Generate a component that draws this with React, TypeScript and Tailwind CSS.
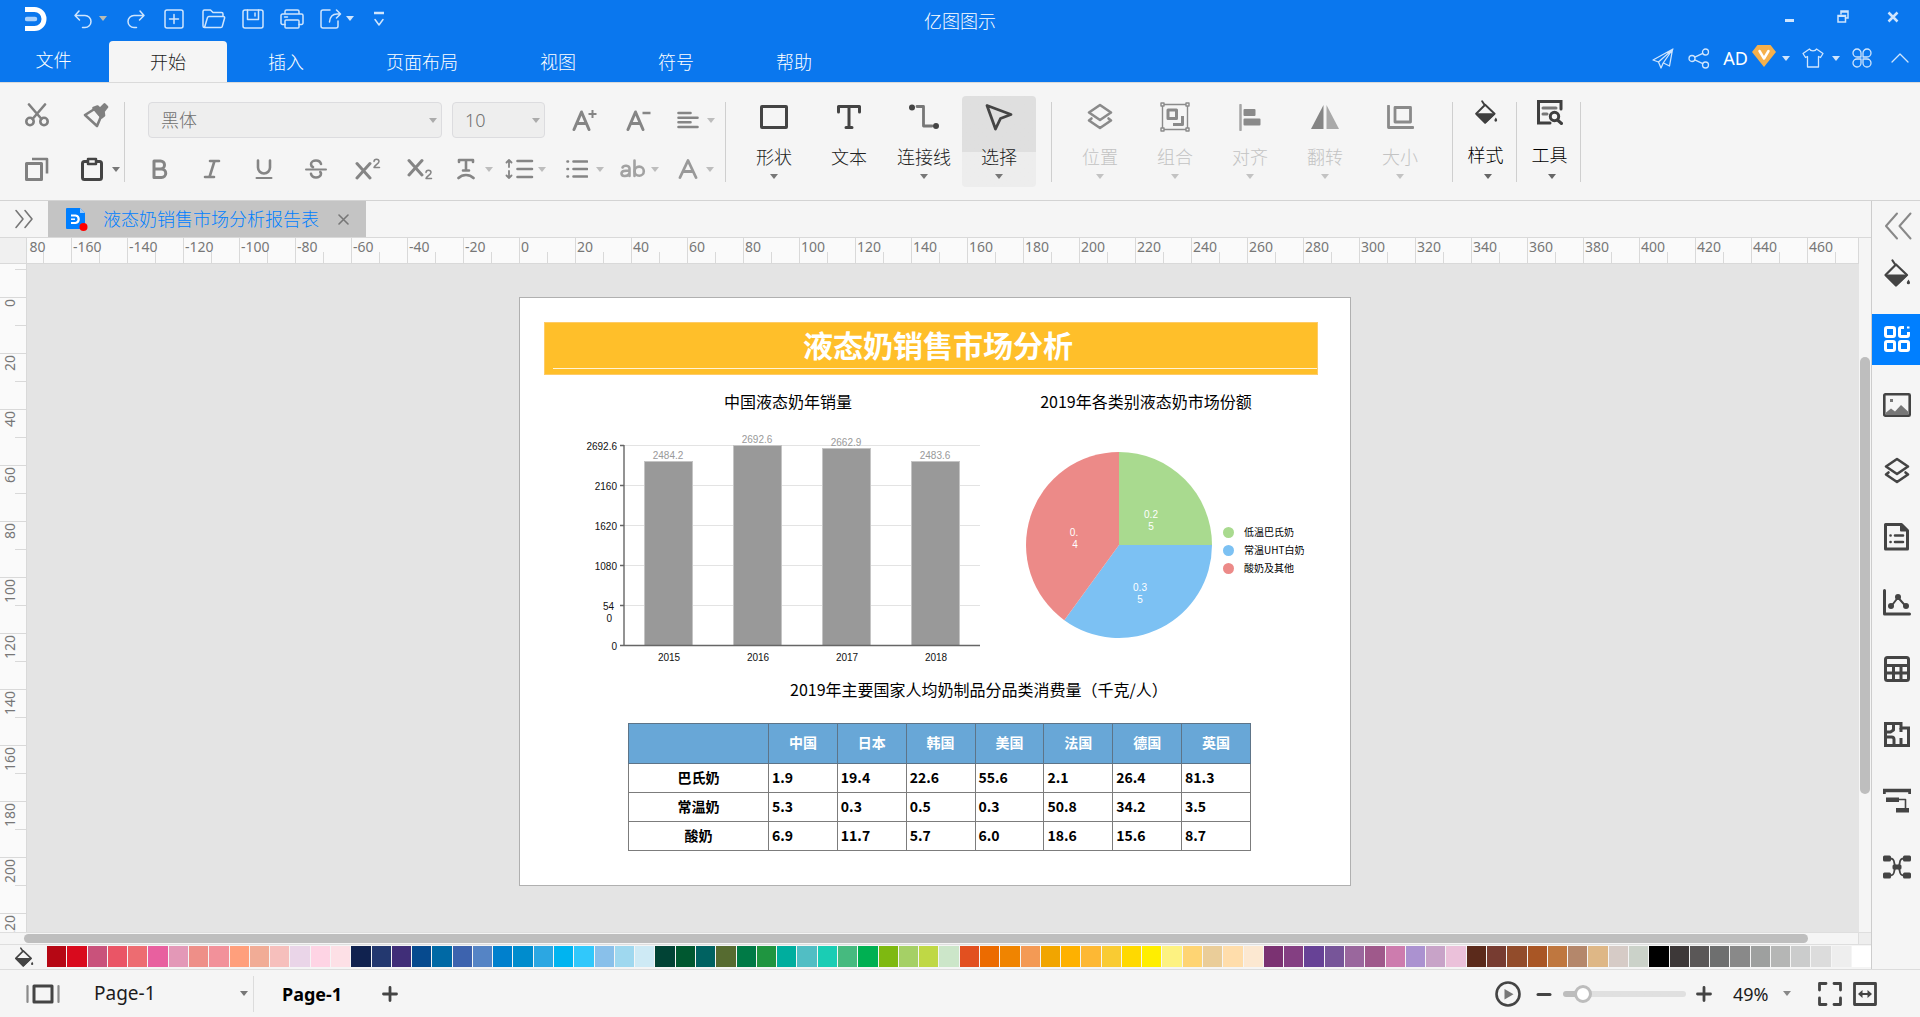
import { useState } from 'react';
import type { ReactNode } from 'react';

type IconProps = { w: number; h: number; children: ReactNode; sw?: number; className?: string };

function Icon({ w, h, children, sw = 2, className = '' }: IconProps) {
  return (
    <svg
      width={w}
      height={h}
      viewBox={`0 0 ${w} ${h}`}
      fill="none"
      stroke="currentColor"
      strokeWidth={sw}
      strokeLinecap="round"
      strokeLinejoin="round"
      aria-hidden="true"
      className={`shrink-0 ${className}`}
    >
      {children}
    </svg>
  );
}

function Caret({ className = '' }: { className?: string }) {
  return (
    <svg width="8" height="5" viewBox="0 0 8 5" fill="currentColor" aria-hidden="true" className={`shrink-0 ${className}`}>
      <path d="M0 0h8L4 5z" />
    </svg>
  );
}

/* ---------- title bar ---------- */

const MENU = ['插入', '页面布局', '视图', '符号', '帮助'];

function BarButton({ label, width, children }: { label: string; width: string; children: ReactNode }) {
  return (
    <button type="button" aria-label={label} className={`flex h-8 items-center justify-center ${width}`}>
      {children}
    </button>
  );
}

function TitleBar() {
  return (
    <div className="grid h-[41px] grid-cols-[1fr_auto_1fr] text-[#cfe5fd]">
      <div className="flex h-[37px] items-center pl-[25px]">
        <svg width="22" height="24" viewBox="0 0 22 24" fill="none" aria-hidden="true">
          <path d="M0 2.500h9.500a9.500 9.500 0 0 1 0 19H0" stroke="#fff" strokeWidth="5" />
          <path d="M2 12h8" stroke="#a9d0fb" strokeWidth="4.500" strokeLinecap="round" />
        </svg>
        <div className="flex items-center pl-[24px]">
          <BarButton label="撤销" width="w-[24px]">
            <Icon w={20} h={20} sw={1.5}>
              <path d="M6 2 2 6.500 6.500 11M2.500 6.500H12a6 6 0 0 1 0 12H9.500" />
            </Icon>
          </BarButton>
          <BarButton label="撤销列表" width="w-[16px]">
            <Caret className="text-[#b9bcb4]" />
          </BarButton>
        </div>
        <div className="flex items-center pl-[14px]">
          <BarButton label="重做" width="w-[22px]">
            <Icon w={20} h={20} sw={1.5}>
              <path d="M14 2l4 4.500L13.500 11M17.500 6.500H8a6 6 0 0 0 0 12h2.500" />
            </Icon>
          </BarButton>
        </div>
        <div className="flex items-center pl-[7px]">
          <BarButton label="新建" width="w-[40px]">
            <Icon w={20} h={20} sw={1.5}>
              <rect x="1" y="1" width="18" height="18" rx="2" />
              <path d="M10 5.500v9M5.500 10h9" />
            </Icon>
          </BarButton>
          <BarButton label="打开" width="w-[40px]">
            <Icon w={24} h={20} sw={1.5}>
              <path d="M2.500 18.500a1.500 1.500 0 0 1-1.500-1.500V2.500A1.500 1.500 0 0 1 2.500 1h6l2.500 2.500h8.500A1.500 1.500 0 0 1 21 5v2.500M2.500 18.500 5.500 8.500a1.500 1.500 0 0 1 1.500-1h14.500a1.200 1.200 0 0 1 1.100 1.500l-2.300 8.300a1.500 1.500 0 0 1-1.500 1.200z" />
            </Icon>
          </BarButton>
          <BarButton label="保存" width="w-[38px]">
            <Icon w={22} h={20} sw={1.5}>
              <rect x="1" y="1" width="20" height="18" rx="2" />
              <path d="M5.500 1v9.500h11V1M13 4v3" />
            </Icon>
          </BarButton>
          <BarButton label="打印" width="w-[40px]">
            <Icon w={24} h={20} sw={1.5}>
              <path d="M5 5V2.500A1.500 1.500 0 0 1 6.500 1h11A1.500 1.500 0 0 1 19 2.500V5M5 15.500H2.500A1.500 1.500 0 0 1 1 14V6.500A1.500 1.500 0 0 1 2.500 5h19A1.500 1.500 0 0 1 23 6.500V14a1.500 1.500 0 0 1-1.500 1.500H19" />
              <rect x="5" y="11" width="14" height="8" rx="1" />
              <path d="M4.500 8h3" />
            </Icon>
          </BarButton>
        </div>
        <div className="flex items-center pl-[8px]">
          <BarButton label="导出" width="w-[22px]">
            <Icon w={22} h={20} sw={1.5}>
              <path d="M10 1H3a2 2 0 0 0-2 2v14a2 2 0 0 0 2 2h13a2 2 0 0 0 2-2v-5M16.500 1l4 4-4 4M20 5h-3c-4 0-7 2.500-7.500 8" />
            </Icon>
          </BarButton>
          <BarButton label="导出列表" width="w-[16px]">
            <Caret />
          </BarButton>
          <div className="pl-[14px]">
            <BarButton label="自定义工具栏" width="w-[14px]">
              <Icon w={12} h={16} sw={1.5}>
                <path d="M1 2h10" strokeWidth="2.500" strokeLinecap="butt" />
                <path d="M2 8.500l4 5.500 4-5.500" />
              </Icon>
            </BarButton>
          </div>
        </div>
      </div>
      <h1 className="self-center text-[18px] leading-6 font-light text-white">亿图图示</h1>
      <div className="flex h-[33px] items-center justify-end pr-[13px]">
        <BarButton label="最小化" width="w-[52px]">
          <span className="mt-[7px] h-[3px] w-[9px] bg-current" />
        </BarButton>
        <BarButton label="还原" width="w-[56px]">
          <Icon w={12} h={13} sw={1.5}>
            <path d="M4 4V1h7v7H8.500M4 2h7" strokeLinejoin="miter" />
            <path d="M1 5.500h7.500V12H1zM1 6.200h7.500" strokeLinejoin="miter" />
          </Icon>
        </BarButton>
        <BarButton label="关闭" width="w-[36px]">
          <Icon w={12} h={12} sw={2.5} className="ml-2">
            <path d="M1.500 1.500l9 9M10.500 1.500l-9 9" strokeLinecap="butt" />
          </Icon>
        </BarButton>
      </div>
    </div>
  );
}

function MenuBar() {
  return (
    <div className="flex h-[41px] justify-between">
      <nav className="flex text-[18px] leading-6 font-light text-white">
        <button type="button" className="w-[107px] pb-1 text-center">
          文件
        </button>
        <button type="button" className="ml-0.5 rounded-t-sm bg-[#f5f5f5] px-[41px] text-[#222]">
          开始
        </button>
        {MENU.map((m) => (
          <button type="button" key={m} className="px-[41px]">
            {m}
          </button>
        ))}
      </nav>
      <div className="flex h-[34px] items-center pr-1 text-[#cfe5fd]">
        <BarButton label="发送" width="w-[36px]">
          <Icon w={22} h={21} sw={1.3}>
            <path d="M21 1 1 12l5.500 2L20.500 1.500 17.500 18l-6-3M6.500 14l2.500 6 2.200-5L20.500 1.500" />
          </Icon>
        </BarButton>
        <BarButton label="分享" width="w-[36px]">
          <Icon w={22} h={21} sw={1.3}>
            <circle cx="4" cy="10.500" r="3" />
            <circle cx="17.500" cy="4" r="3" />
            <circle cx="17.500" cy="17" r="3" />
            <path d="M6.800 9.200l8-3.800M6.800 11.800l8 3.800" />
          </Icon>
        </BarButton>
        <button type="button" className="flex items-center pl-1.5 text-[18px] leading-6 text-white">
          AD
          <svg width="24" height="22" viewBox="0 0 24 22" aria-hidden="true" className="mb-1 ml-1">
            <path d="M5.500 0h13L24 7 12 22 0 7z" fill="#f5b04c" />
            <path d="M7.500 6l4.500 7.500L16.500 6" fill="none" stroke="#fff" strokeWidth="2.500" strokeLinecap="round" strokeLinejoin="round" />
          </svg>
          <Caret className="ml-1.5 text-[#cfe5fd]" />
        </button>
        <button type="button" aria-label="主题" className="flex items-center pl-3">
          <Icon w={22} h={20} sw={1.3}>
            <path d="M7.500 1 1 5.500l2.500 4L5.500 8.500V19h11V8.500l2 1 2.500-4L14.500 1c-1 2.500-6 2.500-7 0z" />
          </Icon>
          <Caret className="ml-2" />
        </button>
        <BarButton label="应用" width="w-[44px]">
          <Icon w={20} h={20} sw={1.3}>
            <path d="M9 5a4 4 0 1 0-4 4h4zM11 5a4 4 0 1 1 4 4h-4zM9 15a4 4 0 1 1-4-4h4zM11 15a4 4 0 1 0 4-4h-4z" />
          </Icon>
        </BarButton>
        <BarButton label="收起功能区" width="w-[32px]">
          <Icon w={18} h={10} sw={1.3}>
            <path d="M1 9l8-8 8 8" />
          </Icon>
        </BarButton>
      </div>
    </div>
  );
}

/* ---------- ribbon ---------- */

function Divider() {
  return <div className="mt-[19px] h-[80px] w-px bg-[#cfcfcf]" />;
}

function SelectBox({ label, value, width }: { label: string; value: string; width: string }) {
  return (
    <div className={`grid h-9 items-center ${width}`}>
      <select
        aria-label={label}
        defaultValue={value}
        className="col-start-1 row-start-1 h-9 w-full appearance-none rounded-sm border border-[#dcdcdf] bg-[#eeeeee] pl-3 text-[18px] font-light text-[#707070]"
      >
        <option>{value}</option>
      </select>
      <Caret className="pointer-events-none col-start-1 row-start-1 mr-[5px] justify-self-end text-[#ababab]" />
    </div>
  );
}

function FormatButton({ label, children }: { label: string; children: ReactNode }) {
  return (
    <button type="button" aria-label={label} className="flex h-9 w-[52px] items-center justify-center">
      {children}
    </button>
  );
}

function DropButton({ label, width, box, children }: { label: string; width: string; box: string; children: ReactNode }) {
  return (
    <button type="button" aria-label={label} className={`flex h-9 items-center ${width}`}>
      <span className={box}>{children}</span>
      <Caret className="text-[#bdbdbd]" />
    </button>
  );
}

function ToolButton({ label, icon, caret = true, state = 'normal' }: { label: string; icon: ReactNode; caret?: boolean; state?: 'normal' | 'active' | 'disabled' }) {
  const tone = state === 'disabled' ? 'text-[#c3c3c3]' : 'text-[#222]';
  const iconTone = state === 'disabled' ? 'text-[#8a8a8a]' : 'text-[#444]';
  const back = state === 'active' ? 'bg-linear-to-b from-[#dfdfdf] from-[56px] to-[#ededed] to-[56px]' : '';
  return (
    <button type="button" disabled={state === 'disabled'} className={`flex h-[91px] w-[74px] flex-col items-center rounded-sm ${tone} ${back}`}>
      <span className={`flex h-[42px] items-center ${iconTone}`}>{icon}</span>
      <span className="mt-[6px] text-[18px] leading-[26px] font-light">{label}</span>
      {caret && <Caret className={state === 'disabled' ? 'mt-1 text-[#c3c3c3]' : 'mt-1 text-[#777]'} />}
    </button>
  );
}

function WideButton({ label, icon }: { label: string; icon: ReactNode }) {
  return (
    <button type="button" className="mt-[13px] flex h-[91px] w-[63px] flex-col items-center pl-0.5 text-black">
      <span className="flex h-8 items-center text-[#3f3f3f]">{icon}</span>
      <span className="mt-[14px] text-[18px] leading-[26px] font-light">{label}</span>
      <Caret className="mt-[6px] ml-1 text-[#666]" />
    </button>
  );
}

function Bucket({ size }: { size: number }) {
  return (
    <svg width={size} height={size} viewBox="0 0 26 28" fill="none" stroke="currentColor" strokeWidth="2.200" strokeLinejoin="round" strokeLinecap="round" aria-hidden="true">
      <path d="M8.500 1.500l3 4.500M12 5.500 23 16 12 26.500 1.500 16z" />
      <path d="M2.500 16.500h19.500L12 26z" fill="currentColor" />
      <path d="M24.500 20.500c1.200 1.800 1.500 2.500 1.500 3.200a1.600 1.600 0 0 1-3.200 0c0-.7.500-1.400 1.700-3.200z" fill="currentColor" stroke="none" />
    </svg>
  );
}

function LayersIcon() {
  return (
    <Icon w={28} h={28} sw={2.6}>
      <path d="M14 2l11 7.500L14 17 3 9.500z" />
      <path d="M5.500 15.500 3 17.500 14 25l11-7.500-2.500-2" />
    </Icon>
  );
}

function Ribbon() {
  return (
    <div className="flex h-[119px] border-y border-t-[#dadada] border-b-[#d3d3d3] bg-[#f5f5f5]">
      <div className="flex w-[124px] flex-col gap-[18px] pt-[14px] text-[#808080]">
        <div className="flex h-9 items-center pl-[25px]">
          <button type="button" aria-label="剪切">
            <Icon w={24} h={24} sw={2.6}>
              <path d="M4 1.500 16.500 16M20 1.500 7.500 16" />
              <circle cx="5" cy="18.500" r="3.700" />
              <circle cx="19" cy="18.500" r="3.700" />
            </Icon>
          </button>
          <button type="button" aria-label="格式刷" className="ml-[34px]">
            <Icon w={26} h={25} sw={2.6}>
              <path d="M2 12 11.500 6 18 13.500 14 23z" />
              <path d="M10.500 5l4-1.500L17 6l4.500-4.500 2.500 2.500-3.500 4.500.5 4-2.500 2z" fill="currentColor" />
            </Icon>
          </button>
        </div>
        <div className="flex h-9 items-center pl-[25px]">
          <button type="button" aria-label="复制">
            <Icon w={24} h={24} sw={3}>
              <path d="M1.500 6.500h15v16h-15z" />
              <path d="M7 2h15v14.500" strokeWidth="2.600" strokeLinecap="butt" />
            </Icon>
          </button>
          <button type="button" aria-label="粘贴" className="ml-8 flex items-center gap-[9px] text-[#444]">
            <Icon w={22} h={24} sw={3}>
              <rect x="1.500" y="4.500" width="19" height="18" rx="2" />
              <path d="M7 2h8v5H7z" fill="#f5f5f5" strokeWidth="2.500" />
            </Icon>
            <Caret className="text-[#777]" />
          </button>
        </div>
      </div>
      <Divider />

      <div className="flex w-[600px] flex-col gap-[13px] pt-[19px] text-[#858585]">
        <div className="flex items-center pl-[23px]">
          <SelectBox label="字体" value="黑体" width="w-[294px]" />
          <div className="w-[10px]" />
          <SelectBox label="字号" value="10" width="w-[93px]" />
          <button type="button" aria-label="增大字号" className="ml-[27px]">
            <Icon w={26} h={22} sw={3}>
              <path d="M2 20.500 9.500 3 17 20.500M5 14.500h9" />
              <path d="M20.500 1v8M16.500 5h8" strokeWidth="2" strokeLinecap="butt" />
            </Icon>
          </button>
          <button type="button" aria-label="减小字号" className="ml-[28px]">
            <Icon w={26} h={22} sw={3}>
              <path d="M2 20.500 9.500 3 17 20.500M5 14.500h9" />
              <path d="M16.500 4h8" strokeWidth="2.500" strokeLinecap="butt" />
            </Icon>
          </button>
          <div className="ml-[25px]">
            <DropButton label="对齐方式" width="w-[40px]" box="w-[30px]">
              <Icon w={22} h={18} sw={2.6}>
                <path d="M1.500 2h12M1.500 6.700h19M1.500 11.300h12M1.500 16h19" />
              </Icon>
            </DropButton>
          </div>
        </div>
        <div className="flex items-center pl-[9px]">
          <FormatButton label="加粗">
            <Icon w={18} h={20} sw={3}>
              <path d="M3 2h6.500a4 4 0 0 1 0 8H3zM3 10h7.500a4.200 4.200 0 0 1 0 8.500H3z" />
            </Icon>
          </FormatButton>
          <FormatButton label="斜体">
            <Icon w={18} h={20} sw={2.6}>
              <path d="M7 2h9M2 18h9M11.500 2 6.500 18" />
            </Icon>
          </FormatButton>
          <FormatButton label="下划线">
            <Icon w={18} h={20} sw={2.6}>
              <path d="M3 1.500v7a6 6 0 0 0 12 0v-7" />
              <path d="M1.500 19h15" strokeWidth="2" />
            </Icon>
          </FormatButton>
          <FormatButton label="删除线">
            <Icon w={22} h={20} sw={2.6}>
              <path d="M16 5c-.5-2-2.500-3.500-5-3.500S6 3 6 5.200c0 1.500.8 2.300 2 3M6 14.800c.5 2.200 2.500 3.700 5 3.700s5-1.500 5-3.700c0-.8-.3-1.400-.7-1.800" />
              <path d="M1 10.500h20" strokeWidth="2" />
            </Icon>
          </FormatButton>
          <FormatButton label="上标">
            <Icon w={26} h={22} sw={3}>
              <path d="M2 5.500 15 20M15 5.500 2 20" />
              <path d="M19 3.500c0-3 5-3 5 0 0 2-4.500 4-5 6h5.500" strokeWidth="1.500" />
            </Icon>
          </FormatButton>
          <FormatButton label="下标">
            <Icon w={26} h={22} sw={3}>
              <path d="M2 2.500 15 17M15 2.500 2 17" />
              <path d="M19 14.500c0-3 5-3 5 0 0 2-4.500 4-5 6h5.500" strokeWidth="1.500" />
            </Icon>
          </FormatButton>
          <div className="flex pl-[11px]">
            <DropButton label="文字效果" width="w-[48px]" box="w-[28px]">
              <Icon w={18} h={22} sw={2.6}>
                <path d="M2 4V2h14v2M9 2v10M6 12.500h6" />
                <path d="M1.500 20c4-4 11-4 15 0" />
              </Icon>
            </DropButton>
            <DropButton label="行距" width="w-[61px]" box="w-[33px]">
              <Icon w={29} h={20} sw={2.6}>
                <path d="M12.500 2h14.500M12.500 10h14.500M12.500 18h14.500" />
                <path d="M4 1v7M1.500 3.500 4 1l2.500 2.500M4 12v7M1.500 16.500 4 19l2.500-2.500" strokeWidth="1.800" />
              </Icon>
            </DropButton>
            <DropButton label="项目符号" width="w-[54px]" box="w-[30px]">
              <Icon w={22} h={20} sw={2.6}>
                <path d="M7.500 2.500h13.500M7.500 10h13.500M7.500 17.500h13.500M1.500 2.500h.5M1.500 10h.5M1.500 17.500h.5" />
              </Icon>
            </DropButton>
            <DropButton label="大小写" width="w-[58px]" box="w-[31px]">
              <Icon w={26} h={20} sw={2.6} className="text-[#a2a2a2]">
                <path d="M2.500 8.500c1-2.500 7-2.500 7 1V17M9.500 11.500c-5 0-8 .3-8 3s5 4 8 0M14.500 1.500V17" />
                <circle cx="19.200" cy="12.200" r="4.600" />
              </Icon>
            </DropButton>
            <DropButton label="字体颜色" width="w-[36px]" box="w-[28px]">
              <Icon w={20} h={20} sw={2.8} className="text-[#999]">
                <path d="M2 18.500 10 1.500l8 17M5 12.500h10" />
              </Icon>
            </DropButton>
          </div>
        </div>
      </div>
      <Divider />

      <div className="flex gap-px pt-[13px] pr-[15px] pl-[11px]">
        <ToolButton
          label="形状"
          icon={
            <Icon w={28} h={24} sw={3}>
              <rect x="1.500" y="1.500" width="25" height="21" rx="0.500" />
            </Icon>
          }
        />
        <ToolButton
          label="文本"
          caret={false}
          icon={
            <Icon w={24} h={24} sw={3}>
              <path d="M1.500 7V1.500h21V7M12 2v20M9 22.500h6" />
            </Icon>
          }
        />
        <ToolButton
          label="连接线"
          icon={
            <Icon w={32} h={26} sw={2.8}>
              <path d="M9 2.500h6.500v19.500H24" className="text-[#777]" stroke="currentColor" />
              <circle cx="4" cy="3.500" r="3" fill="currentColor" stroke="none" />
              <circle cx="28" cy="22" r="3" fill="currentColor" stroke="none" />
            </Icon>
          }
        />
        <ToolButton
          label="选择"
          state="active"
          icon={
            <Icon w={28} h={28} sw={2.8}>
              <path d="M2 2.500 26 11.500 15.500 15.500 10.500 26z" />
            </Icon>
          }
        />
      </div>
      <Divider />

      <div className="flex gap-px pt-[13px] pr-[15px] pl-[11px]">
        <ToolButton label="位置" state="disabled" icon={<LayersIcon />} />
        <ToolButton
          label="组合"
          state="disabled"
          icon={
            <Icon w={30} h={30} sw={1.4}>
              <path d="M2.500 2.500h25v25h-25z" />
              <path d="M1 1h3v3H1zM26 1h3v3h-3zM1 26h3v3H1zM26 26h3v3h-3z" fill="#f5f5f5" />
              <path d="M8 8h8.500v8.500H8z" strokeWidth="3" />
              <path d="M22.500 14v8.500H13" strokeWidth="3" strokeLinecap="butt" />
            </Icon>
          }
        />
        <ToolButton
          label="对齐"
          state="disabled"
          icon={
            <Icon w={22} h={27} sw={2}>
              <path d="M1.500 1v25" strokeWidth="2.500" className="text-[#a5a5a5]" stroke="currentColor" />
              <rect x="5.500" y="6" width="10" height="5" fill="currentColor" />
              <rect x="5.500" y="15.500" width="15" height="5" fill="currentColor" />
            </Icon>
          }
        />
        <ToolButton
          label="翻转"
          state="disabled"
          icon={
            <Icon w={28} h={24} sw={0}>
              <path d="M12.500 0v24H0z" fill="#858585" />
              <path d="M15.500 0v24H28z" fill="#a9a9a9" />
            </Icon>
          }
        />
        <ToolButton
          label="大小"
          state="disabled"
          icon={
            <Icon w={27} h={24} sw={2.8}>
              <path d="M8 2.500h15.500v14.500H8z" />
              <path d="M1.500 1v21.500h24.500" />
            </Icon>
          }
        />
      </div>
      <Divider />
      <WideButton label="样式" icon={<Bucket size={24} />} />
      <Divider />
      <WideButton
        label="工具"
        icon={
          <Icon w={26} h={25} sw={3}>
            <path d="M24 9V1.500H1.500v21.500h11.500" strokeLinejoin="miter" />
            <path d="M6 8h13M6 14h4" className="text-[#777]" stroke="currentColor" />
            <circle cx="17.500" cy="16.500" r="4.200" />
            <path d="M20.500 20l4 3.500" />
          </Icon>
        }
      />
      <Divider />
    </div>
  );
}

/* ---------- document tabs and rulers ---------- */

function DocumentTabs() {
  return (
    <div className="flex h-9 bg-[#f5f5f5]">
      <button type="button" aria-label="展开左侧面板" className="flex w-12 items-center justify-center text-[#777]">
        <Icon w={20} h={20} sw={1.6}>
          <path d="M2 1.500l7 8.500-7 8.500M11 1.500l7 8.500-7 8.500" />
        </Icon>
      </button>
      <div className="flex w-[318px] items-center bg-[#c4c4c4] pl-[18px]">
        <svg width="22" height="23" viewBox="0 0 22 23" aria-hidden="true">
          <path d="M1 0h13l5 5v16H1a1 1 0 0 1-1-1V1a1 1 0 0 1 1-1z" fill="#007fff" />
          <path d="M14 0v5h5z" fill="#9fc9f5" />
          <path d="M5 7.500h4.500a3.800 3.800 0 0 1 0 7.500H5" fill="none" stroke="#fff" strokeWidth="2.200" />
          <path d="M5 11.200h4" stroke="#fff" strokeWidth="1.500" />
          <circle cx="17.500" cy="19" r="4" fill="#f00" />
        </svg>
        <span className="ml-[15px] text-[18px] leading-6 font-light text-[#007fff]">液态奶销售市场分析报告表</span>
        <button type="button" aria-label="关闭文档" className="ml-[19px] text-[#777]">
          <Icon w={11} h={11} sw={1.6}>
            <path d="M1 1l9 9M10 1l-9 9" />
          </Icon>
        </button>
      </div>
    </div>
  );
}

const H_MARKS = Array.from({ length: 33 }, (_, i) => i * 20 - 180);
const V_MARKS = ['', ...Array.from({ length: 12 }, (_, i) => String(i * 20))];

function HorizontalRuler() {
  return (
    <div className="flex h-[27px] border-y border-[#d9d9d9] bg-[#fafafa]">
      <div className="w-[27px] shrink-0 border-r border-[#d9d9d9] bg-[#f0f0f0]" />
      <div className="flex min-w-0 flex-1 overflow-hidden border-r border-[#d9d9d9]">
        <div className="-ml-3 flex">
          {H_MARKS.map((m) => (
            <div key={m} className="flex w-14 shrink-0 border-l border-[#d9d9d9]">
              <span className="w-[27px] pl-px text-[14px] leading-[18px] whitespace-nowrap text-[#777]">{m}</span>
              <span className="h-[11px] self-end border-l border-[#d9d9d9]" />
            </div>
          ))}
        </div>
      </div>
    </div>
  );
}

function VerticalRuler() {
  return (
    <div className="h-full w-[27px] shrink-0 overflow-hidden border-r border-[#d9d9d9] bg-[#fafafa]">
      <div className="-mt-[23px]">
        {V_MARKS.map((m) => (
          <div key={m} className="flex h-14 flex-col border-t border-[#d9d9d9]">
            <div className="flex h-[27px] items-start pt-px pl-px">
              <span className="rotate-180 text-[14px] leading-[18px] whitespace-nowrap text-[#777] [writing-mode:vertical-rl]">{m}</span>
            </div>
            <div className="w-[11px] self-end border-t border-[#d9d9d9]" />
          </div>
        ))}
      </div>
    </div>
  );
}

/* ---------- document content ---------- */

const BARS = [
  { year: '2015', value: '2484.2', x: 60, top: 46 },
  { year: '2016', value: '2692.6', x: 149, top: 30 },
  { year: '2017', value: '2662.9', x: 238, top: 33 },
  { year: '2018', value: '2483.6', x: 327, top: 46 },
];

const SCALE = [
  { text: '2692.6', y: 30 },
  { text: '2160', y: 70 },
  { text: '1620', y: 110 },
  { text: '1080', y: 150 },
  { text: '0', y: 230 },
];

function BarChart() {
  return (
    <svg width="408" height="260" viewBox="0 0 408 260" fontSize="10" className="font-['Liberation_Sans',Arial,sans-serif]" role="img" aria-label="中国液态奶年销量">
      {[30, 70, 110, 150, 190].map((y) => (
        <path key={y} d={`M40 ${y + 0.5}H396`} stroke="#e3e3e3" />
      ))}
      {BARS.map((b) => (
        <g key={b.year}>
          <rect x={b.x + 0.5} y={b.top + 0.5} width="48" height={230 - b.top} fill="#999" stroke="#c4c4c4" />
          <text x={b.x + 24} y={b.top - 2} textAnchor="middle" fill="#999">
            {b.value}
          </text>
          <text x={b.x + 25} y="246" textAnchor="middle" fill="#111">
            {b.year}
          </text>
        </g>
      ))}
      {SCALE.map((s) => (
        <text key={s.text} x="33" y={s.y + 5} textAnchor="end" fill="#111">
          {s.text}
        </text>
      ))}
      <text x="30" y="195" textAnchor="end" fill="#111">
        54
      </text>
      <text x="28" y="207" textAnchor="end" fill="#111">
        0
      </text>
      <path d="M36 30.500h4M36 70.500h4M36 110.500h4M36 150.500h4M36 190.500h4M36 230.500h360M40 30v200" fill="none" stroke="#666" strokeWidth="1.400" />
    </svg>
  );
}

function PieChart() {
  return (
    <svg width="190" height="190" viewBox="0 0 190 190" fontSize="10" fill="#fff" textAnchor="middle" className="shrink-0 font-['Liberation_Sans',Arial,sans-serif]" role="img" aria-label="2019年各类别液态奶市场份额">
      <path d="M95 95V2a93 93 0 0 1 93 93z" fill="#a9da8f" />
      <path d="M95 95h93a93 93 0 0 1-147.700 75.200z" fill="#7cc1f3" />
      <path d="M95 95 40.300 170.200A93 93 0 0 1 95 2z" fill="#ec8a88" />
      <text x="127" y="68">0.2</text>
      <text x="127" y="80">5</text>
      <text x="116" y="141">0.3</text>
      <text x="116" y="153">5</text>
      <text x="50" y="86">0.</text>
      <text x="51" y="98">4</text>
    </svg>
  );
}

const LEGEND = [
  { text: '低温巴氏奶', color: 'bg-[#a9da8f]' },
  { text: '常温UHT白奶', color: 'bg-[#7cc1f3]' },
  { text: '酸奶及其他', color: 'bg-[#ec8a88]' },
];

const COUNTRIES = ['中国', '日本', '韩国', '美国', '法国', '德国', '英国'];
const ROWS = [
  { name: '巴氏奶', values: ['1.9', '19.4', '22.6', '55.6', '2.1', '26.4', '81.3'] },
  { name: '常温奶', values: ['5.3', '0.3', '0.5', '0.3', '50.8', '34.2', '3.5'] },
  { name: '酸奶', values: ['6.9', '11.7', '5.7', '6.0', '18.6', '15.6', '8.7'] },
];

function DocumentPage() {
  return (
    <article className="h-[589px] w-[832px] shrink-0 border border-[#b0b0b0] bg-white font-['Noto_Sans_CJK_SC',sans-serif] text-black">
      <header className="mt-6 ml-6 flex h-[53px] w-[774px] flex-col border border-[#ffcb66] bg-[#ffbf2a]">
        <h2 className="h-[45px] pt-0.5 pl-[14px] text-center text-[30px] leading-[38px] font-bold text-white">液态奶销售市场分析</h2>
        <div className="ml-2 h-px bg-[#fff3d6]" />
      </header>
      <div className="mt-[14px] ml-16 flex gap-6">
        <figure className="w-[408px]">
          <figcaption className="mb-0.5 text-center text-[16px] leading-6">中国液态奶年销量</figcaption>
          <BarChart />
        </figure>
        <figure className="w-[260px]">
          <figcaption className="mb-0.5 text-center text-[16px] leading-6">2019年各类别液态奶市场份额</figcaption>
          <div className="flex items-center pt-[35px] pl-2">
            <PieChart />
            <ul className="pt-[10px] pl-[9px] text-[10px] leading-[18px] whitespace-nowrap">
              {LEGEND.map((l) => (
                <li key={l.text} className="flex items-center gap-[10px]">
                  <span className={`size-[11px] rounded-full ${l.color}`} />
                  {l.text}
                </li>
              ))}
            </ul>
          </div>
        </figure>
      </div>
      <h3 className="mt-0.5 ml-[270px] text-[16px] leading-6 font-normal">2019年主要国家人均奶制品分品类消费量（千克/人）</h3>
      <table className="mt-[22px] ml-[108px] w-[623px] table-fixed border-collapse text-[14px] leading-5 font-bold">
        <thead>
          <tr className="h-10 bg-[#68a7d7] text-white">
            <th aria-label="品类" className="w-[140px] border border-[#5d7488]" />
            {COUNTRIES.map((c) => (
              <th key={c} className="border border-[#5d7488] p-0 pb-1">
                {c}
              </th>
            ))}
          </tr>
        </thead>
        <tbody>
          {ROWS.map((r) => (
            <tr key={r.name} className="h-[29px]">
              <th className="border border-[#7c7c7c] p-0 pb-[3px]">{r.name}</th>
              {r.values.map((v, i) => (
                <td key={COUNTRIES[i]} className="border border-[#7c7c7c] p-0 pb-[3px] pl-[3px]">
                  {v}
                </td>
              ))}
            </tr>
          ))}
        </tbody>
      </table>
    </article>
  );
}

/* ---------- palette ---------- */

const COLORS =
  'b60714 d90a1d c9527b ea5566 ed6c71 e8609f e398b7 ee8f88 f2919a ff9f7c f1ac96 f6bfbc ead5e8 fed4e4 fde0e6 10224f 23386f 402e78 064a8e 0069a5 3d63ae 5584c5 0080cd 008ccd 2ca7e2 00b4f0 31c8fb 89c0ea 9fd8ef ceeaf5 014335 005830 006261 566b30 007a46 1f9540 00ae9e 51bec4 1acdb4 46ba7f 00b052 7eb911 a5d066 bfd845 cce6c9 e25020 ec6b00 f08400 f39a55 f1a500 feb100 fdb834 f9cb33 ffd900 ffee00 fdf281 fed473 eacd99 ffddab fce8d1 7b3272 843f82 674296 775599 9a679d 9f598b cd7cae ab92d0 c8a3c8 ebc1da 5b2a1b 773c31 924c2b a95625 bf773f b4876b deb786 d6cbc6 cbd2c9 000000 3d3838 5a5757 6e6f6f 898989 9ea09f b5b6b5 cbcccc dcdcdc eeeeee ffffff'.split(' ');

function Palette() {
  return (
    <div className="flex h-[25px] items-center border-t border-[#dedede] pb-px">
      <button type="button" aria-label="填充颜色" className="flex w-[47px] justify-center text-[#444]">
        <Bucket size={20} />
      </button>
      <div className="flex h-[21px] min-w-0 flex-1 gap-px">
        {COLORS.map((c) => (
          <button type="button" key={c} aria-label={`颜色 #${c}`} className="min-w-0 flex-1" style={{ backgroundColor: `#${c}` }} />
        ))}
      </div>
    </div>
  );
}

/* ---------- side panel ---------- */

const PANEL: { label: string; icon: ReactNode; active?: boolean }[] = [
  { label: '样式', icon: <Bucket size={28} /> },
  {
    label: '符号库',
    active: true,
    icon: (
      <Icon w={26} h={26} sw={3}>
        <rect x="1.500" y="1.500" width="9" height="9" rx="1.500" />
        <rect x="1.500" y="15.500" width="9" height="9" rx="1.500" />
        <rect x="15.500" y="15.500" width="9" height="9" rx="1.500" />
        <path d="M20 1.500h-3a1.500 1.500 0 0 0-1.500 1.500v6a1.500 1.500 0 0 0 1.500 1.500h6a1.500 1.500 0 0 0 1.500-1.500V6" strokeLinecap="butt" />
        <path d="M24 1.500h.5" strokeLinecap="square" strokeWidth="2" />
      </Icon>
    ),
  },
  {
    label: '图片',
    icon: (
      <Icon w={28} h={24} sw={2.6}>
        <rect x="1.300" y="1.300" width="25.400" height="21.400" rx="1" />
        <path d="M3 19.500l5-4 4 3 6-6.500 7 6.500V22H3z" fill="#777" stroke="none" />
        <path d="M7 6h3v3H7z" fill="#777" stroke="none" />
      </Icon>
    ),
  },
  { label: '图层', icon: <LayersIcon /> },
  {
    label: '备注',
    icon: (
      <Icon w={26} h={28} sw={3}>
        <path d="M1.500 1.500h16l6 6V26h-22z" />
        <path d="M17 1.500v6h6z" fill="currentColor" strokeWidth="2" />
        <path d="M6.500 12.500h.1M11 12.500h8M6.500 19h.1M11 19h8" strokeWidth="2.600" />
      </Icon>
    ),
  },
  {
    label: '图表',
    icon: (
      <Icon w={28} h={27} sw={3}>
        <path d="M1.500 1.500V25h25" />
        <path d="M8 17.500 15 8.500l8 9" strokeWidth="2" />
        <circle cx="8" cy="17" r="3" fill="currentColor" stroke="none" />
        <circle cx="15" cy="8" r="3" fill="currentColor" stroke="none" />
        <circle cx="23" cy="17" r="3" fill="currentColor" stroke="none" />
      </Icon>
    ),
  },
  {
    label: '表格',
    icon: (
      <Icon w={26} h={26} sw={3}>
        <rect x="1.500" y="1.500" width="23" height="23" rx="2" />
        <path d="M1.500 9.500h23M1.500 17h23M9.500 10v14M17 10v14" strokeLinecap="butt" />
      </Icon>
    ),
  },
  {
    label: '平面图',
    icon: (
      <Icon w={26} h={25} sw={3}>
        <path d="M1.500 1.500H17v4.500h7.500v17.500h-23z" strokeLinejoin="miter" />
        <path d="M9.500 2v6l-3 2H2M2 15h5.500a2.500 2.500 0 0 1 2.500 2.500V23M17 6v4M17 16v7" strokeLinecap="butt" />
      </Icon>
    ),
  },
  {
    label: '甘特图',
    icon: (
      <Icon w={28} h={25} sw={2}>
        <path d="M1 6V2.500h26V6" strokeWidth="3.500" strokeLinecap="butt" strokeLinejoin="miter" />
        <path d="M3 9.500h13v4.500H3zM13 20h13v4.500H13z" fill="currentColor" stroke="none" />
        <path d="M16 11.500h6.500V20" strokeWidth="1.600" />
      </Icon>
    ),
  },
  {
    label: '思维导图',
    icon: (
      <Icon w={28} h={24} sw={1.8}>
        <path d="M7 3.500c7 0 2 8 7 8.500 5-.5 0-8.500 7-8.500M7 20.500c7 0 2-8 7-8.500 5 .5 0 8.500 7 8.500" />
        <g fill="currentColor" stroke="none">
          <rect x="0" y="0.500" width="8" height="6" rx="1.500" />
          <rect x="20" y="0.500" width="8" height="6" rx="1.500" />
          <rect x="0" y="17.500" width="8" height="6" rx="1.500" />
          <rect x="20" y="17.500" width="8" height="6" rx="1.500" />
          <rect x="9.500" y="9.500" width="9" height="5" rx="1.500" />
        </g>
      </Icon>
    ),
  },
];

function SidePanel() {
  return (
    <aside className="flex w-[49px] shrink-0 flex-col border-l border-[#cdcdcd] bg-[#f5f5f5]">
      <button type="button" aria-label="展开右侧面板" className="flex h-[47px] items-center justify-center pt-0.5 pl-1 text-[#888]">
        <Icon w={28} h={28} sw={2}>
          <path d="M13 1.500 2 14l11 12.500M26.500 1.500 15.500 14l11 12.500" />
        </Icon>
      </button>
      <div className="flex flex-col gap-[15px]">
        {PANEL.map((p) => (
          <button type="button" key={p.label} aria-label={p.label} className={`flex h-[51px] items-center justify-center pb-0.5 pl-0.5 ${p.active ? 'bg-[#007fff] text-white' : 'text-[#444]'}`}>
            {p.icon}
          </button>
        ))}
      </div>
    </aside>
  );
}

/* ---------- status bar ---------- */

function StatusBar() {
  const [zoom, setZoom] = useState(49);
  return (
    <footer className="flex h-12 items-center justify-between border-t border-[#dcdcdc] bg-[#f5f5f5] text-[#444]">
      <div className="flex h-full items-center">
        <button type="button" aria-label="页面视图" className="ml-[26px]">
          <Icon w={34} h={20} sw={3}>
            <rect x="8" y="2" width="18" height="16" />
            <path d="M1.500 2v16M32.500 2v16" strokeWidth="2.200" className="text-[#8a8a8a]" stroke="currentColor" />
          </Icon>
        </button>
        <div className="ml-[34px] grid w-[154px] items-center">
          <select aria-label="页面" defaultValue="Page-1" className="col-start-1 row-start-1 h-8 w-full appearance-none bg-transparent text-[19px] text-[#1c1c1c]">
            <option>Page-1</option>
          </select>
          <Caret className="pointer-events-none col-start-1 row-start-1 justify-self-end text-[#777]" />
        </div>
        <div className="ml-[5px] h-9 w-px bg-[#dcdcdc]" />
        <button type="button" className="ml-[28px] text-[18px] leading-6 font-bold text-black">
          Page-1
        </button>
        <button type="button" aria-label="新建页面" className="ml-10">
          <Icon w={16} h={16} sw={2.8}>
            <path d="M8 1.500v13M1.500 8h13" />
          </Icon>
        </button>
      </div>
      <div className="flex h-full items-center pr-[43px]">
        <button type="button" aria-label="播放">
          <Icon w={26} h={26} sw={2.6}>
            <circle cx="13" cy="13" r="11.500" />
            <path d="M9.500 8l9 5.300-9 5.300z" fill="#777" stroke="none" />
          </Icon>
        </button>
        <button type="button" aria-label="缩小" className="ml-[15px]">
          <Icon w={16} h={16} sw={3}>
            <path d="M2 8.500h12" />
          </Icon>
        </button>
        <input
          type="range"
          aria-label="缩放"
          min={0}
          max={450}
          value={zoom}
          onChange={(e) => setZoom(Number(e.target.value))}
          className="ml-[11px] h-[6px] w-[123px] appearance-none rounded-full bg-linear-to-r from-[#bdbdbd] from-[18px] to-[#e0e0e0] to-[18px] [&::-webkit-slider-thumb]:size-[18px] [&::-webkit-slider-thumb]:appearance-none [&::-webkit-slider-thumb]:rounded-full [&::-webkit-slider-thumb]:border-[3px] [&::-webkit-slider-thumb]:border-[#bdbdbd] [&::-webkit-slider-thumb]:bg-white"
        />
        <button type="button" aria-label="放大" className="ml-[10px]">
          <Icon w={16} h={16} sw={2.8}>
            <path d="M8 1.500v13M1.500 8h13" />
          </Icon>
        </button>
        <button type="button" className="ml-[21px] flex items-center text-[18px] leading-6 text-[#1c1c1c]">
          <span className="w-[50px] text-left">{zoom}%</span>
          <Caret className="text-[#888]" />
        </button>
        <button type="button" aria-label="全屏" className="ml-[27px]">
          <Icon w={24} h={24} sw={2.8}>
            <path d="M1.500 8V1.500H8M16 1.500h6.500V8M22.500 16v6.500H16M8 22.500H1.500V16" />
          </Icon>
        </button>
        <button type="button" aria-label="适应宽度" className="ml-[11px]">
          <Icon w={24} h={24} sw={2.8}>
            <rect x="1.500" y="1.500" width="21" height="21" />
            <path d="M7 12h10" strokeWidth="2" />
            <path d="M9.500 8 5 12l4.500 4zM14.500 8l4.500 4-4.500 4z" fill="currentColor" stroke="none" />
          </Icon>
        </button>
      </div>
    </footer>
  );
}

export default function App() {
  return (
    <div className="flex h-screen min-h-[960px] flex-col overflow-hidden bg-[#f5f5f5] font-['Noto_Sans','Noto_Sans_CJK_SC',sans-serif]">
      <header className="bg-[#0a77ee]">
        <TitleBar />
        <MenuBar />
      </header>
      <Ribbon />
      <div className="flex min-h-0 flex-1">
        <main className="flex min-w-0 flex-1 flex-col">
          <DocumentTabs />
          <div className="flex min-h-0 flex-1">
            <div className="flex min-w-0 flex-1 flex-col">
              <HorizontalRuler />
              <div className="flex min-h-0 flex-1">
                <VerticalRuler />
                <div className="min-w-0 flex-1 overflow-hidden bg-[#e4e4e4] pt-[33px] pl-[492px]">
                  <DocumentPage />
                </div>
              </div>
            </div>
            <div className="flex w-3 flex-col border-t border-[#d9d9d9] px-px pt-[119px]">
              <div className="h-[437px] rounded-full bg-[#bebebe]" />
            </div>
          </div>
          <div className="flex h-3 border-t border-[#dedede]">
            <div className="min-w-0 flex-1 pt-px pr-[50px] pl-6">
              <div className="h-[9px] rounded-full bg-[#bebebe]" />
            </div>
            <div className="w-[13px] border-l border-[#dedede] bg-[#eeeeee]" />
          </div>
          <Palette />
        </main>
        <SidePanel />
      </div>
      <StatusBar />
    </div>
  );
}
